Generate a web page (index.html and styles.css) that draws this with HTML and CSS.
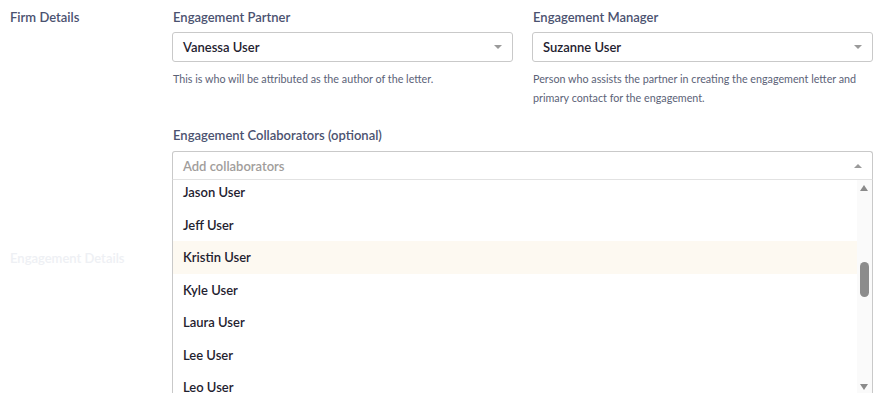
FILE: index.html
```html
<!DOCTYPE html>
<html>
<head>
<meta charset="utf-8">
<link rel="stylesheet" href="styles.css">
</head>
<body>
<div class="page">
  <section class="section">
    <div class="section-label">Firm Details</div>
    <div class="fields">
      <div class="row">
        <div class="field">
          <div class="label">Engagement Partner</div>
          <div class="select">
            <span class="value">Vanessa User</span>
            <span class="caret down"></span>
          </div>
          <div class="help">This is who will be attributed as the author of the letter.</div>
        </div>
        <div class="field">
          <div class="label">Engagement Manager</div>
          <div class="select">
            <span class="value">Suzanne User</span>
            <span class="caret down"></span>
          </div>
          <div class="help">Person who assists the partner in creating the engagement letter and primary contact for the engagement.</div>
        </div>
      </div>
      <div class="field collab">
        <div class="label">Engagement Collaborators (optional)</div>
        <div class="combo">
          <div class="select open">
            <span class="placeholder">Add collaborators</span>
            <span class="caret up"></span>
          </div>
          <div class="menu">
            <ul class="options">
              <li class="option">Jason User</li>
              <li class="option">Jeff User</li>
              <li class="option active">Kristin User</li>
              <li class="option">Kyle User</li>
              <li class="option">Laura User</li>
              <li class="option">Lee User</li>
              <li class="option">Leo User</li>
            </ul>
            <div class="scrollbar">
              <span class="sb-arrow sb-up"></span>
              <span class="sb-thumb"></span>
              <span class="sb-arrow sb-down"></span>
            </div>
          </div>
        </div>
      </div>
    </div>
  </section>
  <section class="section faded">
    <div class="section-label">Engagement Details</div>
  </section>
</div>
</body>
</html>
```
FILE: styles.css
```css
* { box-sizing: border-box; }
html, body { margin: 0; padding: 0; background: #fff; overflow: hidden; }
body {
  font-family: Lato, "Open Sans", sans-serif;
  color: #1f2230;
  width: 878px;
  height: 393px;
}
.page { display: flex; flex-direction: column; }
.section { display: flex; }
.section-label {
  width: 172px;
  flex: none;
  padding: 7px 0 0 10px;
  font-size: 13px;
  line-height: 20px;
  font-weight: 600;
  color: #4b5270;
}
.fields { flex: 1; padding-right: 5px; }
.row {
  display: grid;
  grid-template-columns: 1fr 1fr;
  column-gap: 19px;
}
.label {
  padding-top: 7px;
  padding-left: 1px;
  font-size: 13px;
  line-height: 20px;
  font-weight: 600;
  color: #4b5270;
  margin-bottom: 5px;
}
.select {
  position: relative;
  height: 30px;
  border: 1px solid #c9c9c9;
  border-radius: 3px;
  display: flex;
  align-items: center;
  padding: 0 10px;
  background: #fff;
}
.value { font-size: 13px; font-weight: 600; color: #1f2230; }
.placeholder { font-size: 13px; font-weight: 600; color: #a19d9b; }
.caret {
  margin-left: auto;
  width: 0; height: 0;
  border-left: 4px solid transparent;
  border-right: 4px solid transparent;
  margin-right: 0;
}
.caret.down { border-top: 4px solid #9a9a9a; }
.caret.up { border-bottom: 4px solid #9a9a9a; }
.help {
  margin-top: 7px;
  padding-left: 1px;
  font-size: 10.75px;
  line-height: 19px;
  color: #5b6277;
}
.collab { margin-top: 11px; }
.collab .label { margin-bottom: 6px; }
.combo { position: relative; }
.select.open {
  border-bottom-color: #e2e2e2;
  border-radius: 3px 3px 0 0;
  height: 29px;
}
.menu {
  position: absolute;
  top: 100%;
  left: 0;
  right: 0;
  height: 216px;
  background: #fff;
  border: 1px solid #c9c9c9;
  border-top: none;
  display: flex;
  overflow: hidden;
  z-index: 2;
}
.options {
  list-style: none;
  margin: -4px 0 0 0;
  padding: 0;
  flex: 1;
}
.option {
  height: 32.5px;
  display: flex;
  align-items: center;
  padding-left: 10px;
  font-size: 13px;
  font-weight: 600;
  color: #1f2230;
}
.option.active { background: #fdf9f1; }
.scrollbar {
  position: relative;
  width: 15px;
  flex: none;
  background: #fafafa;
}
.sb-arrow {
  position: absolute;
  left: 3px;
  width: 0; height: 0;
  border-left: 4.5px solid transparent;
  border-right: 4.5px solid transparent;
}
.sb-up { top: 5px; border-bottom: 6px solid #8a8a8a; }
.sb-down { top: 204px; border-top: 6px solid #8a8a8a; }
.sb-thumb {
  position: absolute;
  left: 3px;
  top: 82px;
  width: 9px;
  height: 35px;
  border-radius: 4.5px;
  background: #8c8c8c;
}
.faded { margin-top: 61px; }
.faded .section-label { color: #eef0f4; }
```
